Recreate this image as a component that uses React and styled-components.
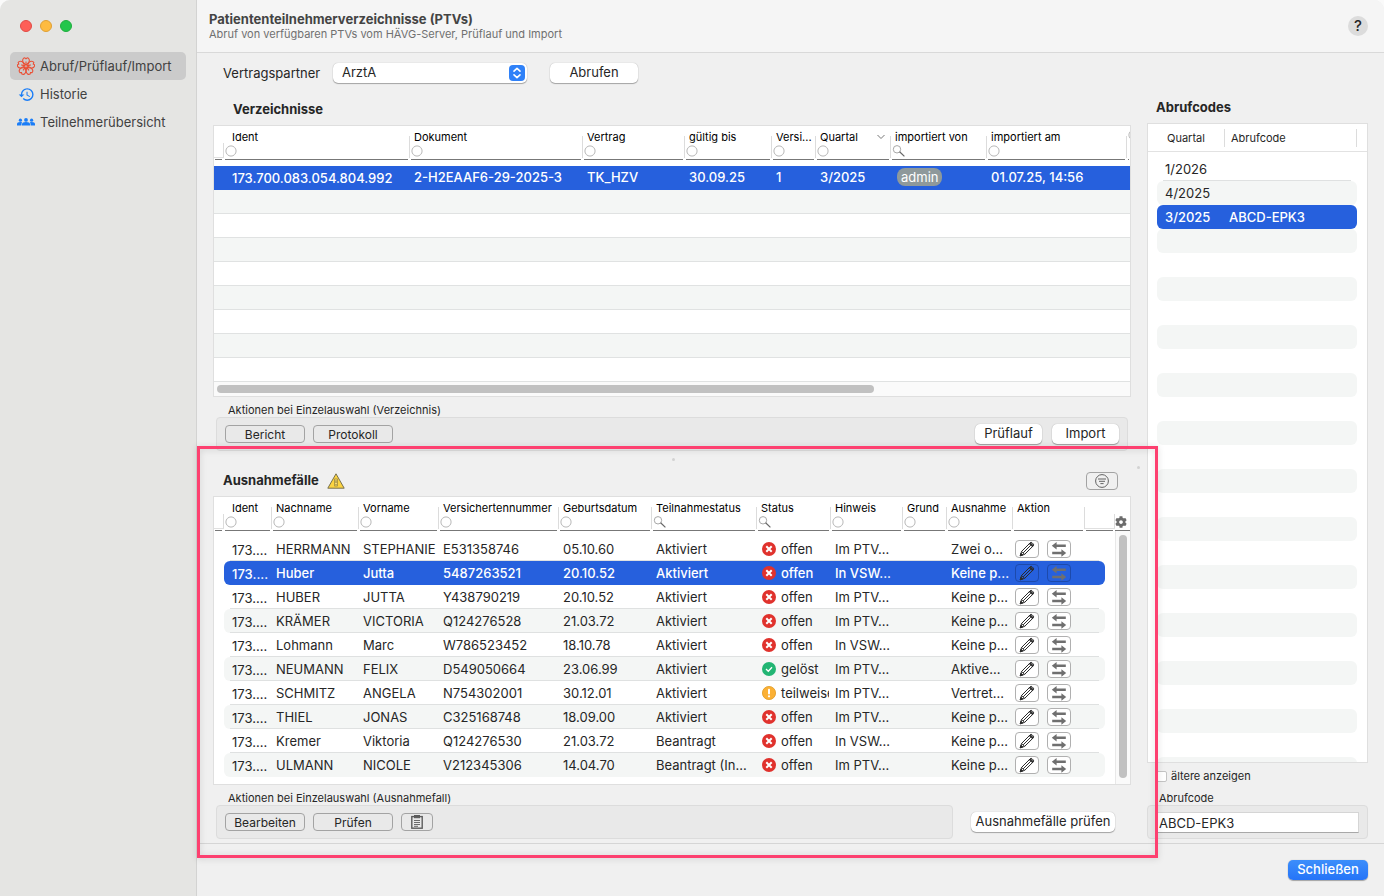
import { useState } from "react";
import styled, { createGlobalStyle } from "styled-components";
import { FaCog } from "react-icons/fa";
import { MdHistory } from "react-icons/md";

const listColumns = [
    { label: "Ident", filter: "any" },
    { label: "Dokument", filter: "any" },
    { label: "Vertrag", filter: "any" },
    { label: "gültig bis", filter: "any" },
    { label: "Versi...", filter: "any" },
    { label: "Quartal", filter: "any", sorted: true },
    { label: "importiert von", filter: "search" },
    { label: "importiert am", filter: "any" },
    { label: "", filter: "any" },
];

const caseColumns = [
    { label: "Ident", filter: "any" },
    { label: "Nachname", filter: "any" },
    { label: "Vorname", filter: "any" },
    { label: "Versichertennummer", filter: "any" },
    { label: "Geburtsdatum", filter: "any" },
    { label: "Teilnahmestatus", filter: "search" },
    { label: "Status", filter: "search" },
    { label: "Hinweis", filter: "any" },
    { label: "Grund", filter: "any" },
    { label: "Ausnahme", filter: "any" },
    { label: "Aktion" },
];

const cases = [
    ["HERRMANN", "STEPHANIE", "E531358746", "05.10.60", "Aktiviert", "offen", "Im PTV...", "Zwei o..."],
    ["Huber", "Jutta", "5487263521", "20.10.52", "Aktiviert", "offen", "In VSW...", "Keine p..."],
    ["HUBER", "JUTTA", "Y438790219", "20.10.52", "Aktiviert", "offen", "Im PTV...", "Keine p..."],
    ["KRÄMER", "VICTORIA", "Q124276528", "21.03.72", "Aktiviert", "offen", "Im PTV...", "Keine p..."],
    ["Lohmann", "Marc", "W786523452", "18.10.78", "Aktiviert", "offen", "In VSW...", "Keine p..."],
    ["NEUMANN", "FELIX", "D549050664", "23.06.99", "Aktiviert", "gelöst", "Im PTV...", "Aktive..."],
    ["SCHMITZ", "ANGELA", "N754302001", "30.12.01", "Aktiviert", "teilweise", "Im PTV...", "Vertret..."],
    ["THIEL", "JONAS", "C325168748", "18.09.00", "Aktiviert", "offen", "Im PTV...", "Keine p..."],
    ["Kremer", "Viktoria", "Q124276530", "21.03.72", "Beantragt", "offen", "In VSW...", "Keine p..."],
    ["ULMANN", "NICOLE", "V212345306", "14.04.70", "Beantragt (In...", "offen", "Im PTV...", "Keine p..."],
];

const codes = [
    ["1/2026", ""],
    ["4/2025", ""],
    ["3/2025", "ABCD-EPK3"],
];

const FlowerIcon = () => (
    <svg width="18" height="18" viewBox="0 0 18 18" fill="none" stroke="#ea5036" strokeWidth="1.1">
        {[0, 72, 144, 216, 288].map((angle) => (
            <g key={angle} transform={`rotate(${angle} 9 9.4)`}>
                <path d="M9 8.2 L6.2 5.4 C4.9 3.2 6 1 7.8 0.8 L9 1.8 L10.2 0.8 C12 1 13.1 3.2 11.8 5.4 Z" />
                <path d="M9 4.4 V7.6" />
            </g>
        ))}
    </svg>
);

const PeopleIcon = () => (
    <svg width="18" height="8" viewBox="0 0 18 8" fill="#1a7df7">
        <circle cx="3.4" cy="2.2" r="1.6" />
        <circle cx="9" cy="1.9" r="1.9" />
        <circle cx="14.6" cy="2.2" r="1.6" />
        <path d="M0 7.6 V6 Q0 4 3.4 4 Q4.6 4 5.2 4.3 Q4.4 5.2 4.4 6.2 V7.6 Z" />
        <path d="M5 7.6 V6.2 Q5 3.9 9 3.9 Q13 3.9 13 6.2 V7.6 Z" />
        <path d="M18 7.6 V6 Q18 4 14.6 4 Q13.4 4 12.8 4.3 Q13.6 5.2 13.6 6.2 V7.6 Z" />
    </svg>
);

const CircleIcon = () => (
    <svg width="12" height="12" viewBox="0 0 12 12">
        <circle cx="6" cy="6" r="5.1" fill="#fff" stroke="#b8b8b8" />
    </svg>
);

const LoupeIcon = () => (
    <svg width="14" height="12" viewBox="0 0 14 12" fill="none">
        <circle cx="5" cy="4.3" r="3.7" stroke="#a8a8a8" />
        <path d="M7.6 6.8 L12.4 11.4" stroke="#666" strokeWidth="1.2" />
    </svg>
);

const StatusIcon = ({ status }) => {
    if (status === "gelöst") {
        return (
            <svg width="14" height="14" viewBox="0 0 14 14" fill="none">
                <circle cx="7" cy="7" r="7" fill="#22b573" />
                <path d="M4 7 L6.3 9.2 L10 5.2" stroke="#fff" strokeWidth="1.3" />
            </svg>
        );
    }
    if (status === "teilweise") {
        return (
            <svg width="14" height="14" viewBox="0 0 14 14">
                <circle cx="7" cy="7" r="6.6" fill="#fbb034" stroke="#e09a25" strokeWidth="0.8" />
                <rect x="6" y="2.8" width="2" height="5.6" rx="0.8" fill="#fff" />
                <circle cx="7" cy="10.3" r="1.1" fill="#fff" />
            </svg>
        );
    }
    return (
        <svg width="14" height="14" viewBox="0 0 14 14">
            <circle cx="7" cy="7" r="7" fill="#e0322d" />
            <path d="M4.3 4.3 L9.7 9.7 M9.7 4.3 L4.3 9.7" stroke="#fff" strokeWidth="2" />
        </svg>
    );
};

const PencilIcon = () => (
    <svg width="16" height="16" viewBox="0 0 16 16" fill="none" stroke="#2b2b2b" strokeWidth="1">
        <path d="M1.2 14.8 L2.6 10.4 L11.2 1.8 Q12.2 0.9 13.1 1.8 L14.3 3 Q15.1 3.9 14.3 4.8 L5.6 13.4 Z" />
        <path d="M2.6 10.4 L5.6 13.4 M4.1 11.9 L11.8 4.2" />
        <path d="M1.2 14.8 L2 12.2 L3.8 14 Z M11.4 1.8 L14.3 4.7 L13.2 5.6 L10.4 2.8 Z" fill="#2b2b2b" />
    </svg>
);

const SwapIcon = () => (
    <svg width="16" height="16" viewBox="0 0 16 16" fill="#6f6f6f">
        <path d="M0.8 4.8 L5.6 1 V3.6 H14.8 V6 H5.6 V8.6 Z" />
        <path d="M15.2 12 L10.4 8.2 V10.8 H1.2 V13.2 H10.4 V15.8 Z" />
    </svg>
);

const WarningIcon = () => (
    <svg width="18" height="16" viewBox="0 0 18 16">
        <path d="M9 0.8 L17.2 15.2 H0.8 Z" fill="#fdd440" stroke="#77704f" strokeLinejoin="round" />
        <rect x="7.7" y="6" width="2.6" height="7" fill="#fbe07a" stroke="#8a7a35" strokeWidth="0.7" />
        <path d="M9 7.2 V10 M9 11 V12.2" stroke="#6f6126" strokeWidth="0.8" />
    </svg>
);

const FilterIcon = () => (
    <svg width="14" height="14" viewBox="0 0 14 14" fill="none" stroke="#636363">
        <circle cx="7" cy="7" r="6.4" />
        <path d="M3 5 H11 M4 7.3 H10 M5.4 9.6 H8.6" />
    </svg>
);

const ClipboardIcon = () => (
    <svg width="12" height="14" viewBox="0 0 12 14" fill="none" stroke="#5c5c5c">
        <rect x="0.8" y="1.6" width="10.4" height="11.6" strokeWidth="1.4" />
        <rect x="3.5" y="0.5" width="5" height="2.2" fill="#5c5c5c" />
        <path d="M3 5.5 H9 M3 7.5 H9 M3 9.5 H9 M3 11.3 H7" strokeWidth="0.9" />
    </svg>
);

const HeaderCells = ({ columns }) => (
    <>
        <HeadCell as="td" $blank />
        {columns.map(({ label, filter, sorted }, index) => (
            <HeadCell key={index} $first={index === 0}>
                <HeadLabel>
                    {label}
                    {sorted && (
                        <svg width="8" height="6" viewBox="0 0 8 6" fill="none" stroke="#777">
                            <path d="M0.5 1 L4 4.5 L7.5 1" />
                        </svg>
                    )}
                </HeadLabel>
                {filter && (
                    <FilterField>
                        {filter === "search" ? <LoupeIcon /> : <CircleIcon />}
                        <input type="text" aria-label={`${label} filtern`} />
                    </FilterField>
                )}
            </HeadCell>
        ))}
    </>
);

const Directories = () => (
    <section>
        <Heading>Verzeichnisse</Heading>
        <Panel>
            <Table>
                <thead>
                    <ListHead>
                        <HeaderCells columns={listColumns} />
                    </ListHead>
                </thead>
                <ListBody>
                    <ListRow $selected>
                        <td />
                        <Cell $first>173.700.083.054.804.992</Cell>
                        <Cell>2-H2EAAF6-29-2025-3</Cell>
                        <Cell>TK_HZV</Cell>
                        <Cell>30.09.25</Cell>
                        <Cell>1</Cell>
                        <Cell>3/2025</Cell>
                        <Cell><Badge>admin</Badge></Cell>
                        <Cell>01.07.25, 14:56</Cell>
                    </ListRow>
                    {Array.from({ length: 8 }, (_, index) => (
                        <ListRow key={index} $odd={index % 2 === 0}><td /></ListRow>
                    ))}
                </ListBody>
            </Table>
            <ScrollTrack><ScrollThumb /></ScrollTrack>
        </Panel>
        <Group>
            <GroupLabel>Aktionen bei Einzelauswahl (Verzeichnis)</GroupLabel>
            <GroupBox>
                <FlatButton>Bericht</FlatButton>
                <FlatButton>Protokoll</FlatButton>
                <Spacer />
                <PushButton $width={67}>Prüflauf</PushButton>
                <PushButton $width={67}>Import</PushButton>
            </GroupBox>
        </Group>
    </section>
);

const Exceptions = () => {
    const [selected, setSelected] = useState(1);

    return (
        <ExceptionSection>
            <ExceptionTitle>
                <h2>Ausnahmefälle</h2>
                <WarningIcon />
                <Spacer />
                <FlatButton $small aria-label="Filter"><FilterIcon /></FlatButton>
            </ExceptionTitle>
            <Panel>
                <Table>
                    <thead>
                        <CaseHead>
                            <HeaderCells columns={caseColumns} />
                            <HeadCell as="td" $blank />
                            <GearCell><FaCog /></GearCell>
                        </CaseHead>
                    </thead>
                    <CaseBody>
                        {cases.map(([last, first, number, born, state, status, hint, exception], index) => (
                            <CaseRow
                                key={index}
                                $odd={index % 2 === 1}
                                $selected={index === selected}
                                onClick={() => setSelected(index)}
                            >
                                <Cell $first>173....</Cell>
                                <Cell>{last}</Cell>
                                <Cell>{first}</Cell>
                                <Cell>{number}</Cell>
                                <Cell>{born}</Cell>
                                <Cell>{state}</Cell>
                                <Cell>
                                    <Status><StatusIcon status={status} /><span>{status}</span></Status>
                                </Cell>
                                <Cell>{hint}</Cell>
                                <Cell />
                                <Cell>{exception}</Cell>
                                <ActionCell>
                                    <RowButton aria-label="Bearbeiten" $selected={index === selected}><PencilIcon /></RowButton>
                                    <RowButton aria-label="Abgleichen" $selected={index === selected}><SwapIcon /></RowButton>
                                </ActionCell>
                            </CaseRow>
                        ))}
                    </CaseBody>
                </Table>
                <SideTrack><SideThumb /></SideTrack>
            </Panel>
            <BottomRow>
                <Group>
                    <GroupLabel>Aktionen bei Einzelauswahl (Ausnahmefall)</GroupLabel>
                    <GroupBox>
                        <FlatButton>Bearbeiten</FlatButton>
                        <FlatButton>Prüfen</FlatButton>
                        <FlatButton $small aria-label="Protokoll"><ClipboardIcon /></FlatButton>
                    </GroupBox>
                </Group>
                <PushButton $width={144}>Ausnahmefälle prüfen</PushButton>
            </BottomRow>
            <GripDot />
            <GripDot $side />
            <Highlight />
        </ExceptionSection>
    );
};

const Codes = () => {
    const [code, setCode] = useState("ABCD-EPK3");
    const [older, setOlder] = useState(false);

    return (
        <CodeSection>
            <CodeHeading>Abrufcodes</CodeHeading>
            <CodePanel>
                <Table>
                    <thead>
                        <CodeHead>
                            <th>Quartal</th>
                            <th>Abrufcode</th>
                        </CodeHead>
                    </thead>
                    <CodeBody>
                        {Array.from({ length: 26 }, (_, index) => (
                            <CodeRow
                                key={index}
                                $odd={index % 2 === 1}
                                $selected={index === 2}
                                $line={index === 0}
                            >
                                <td>{codes[index]?.[0]}</td>
                                <td>{codes[index]?.[1]}</td>
                            </CodeRow>
                        ))}
                    </CodeBody>
                </Table>
            </CodePanel>
            <CheckLabel>
                <input type="checkbox" checked={older} onChange={() => setOlder(!older)} />
                ältere anzeigen
            </CheckLabel>
            <GroupLabel as="label" htmlFor="code">Abrufcode</GroupLabel>
            <GroupBox>
                <CodeInput id="code" value={code} onChange={(e) => setCode(e.target.value)} />
            </GroupBox>
        </CodeSection>
    );
};

const App = () => (
    <>
        <GlobalStyle />
        <Window>
            <Sidebar>
                <Lights>
                    <Light $color="#fe5f57" $edge="#e14b45" />
                    <Light $color="#febb40" $edge="#dfa035" />
                    <Light $color="#23c64b" $edge="#1fae3e" />
                </Lights>
                <nav>
                    <NavItem href="#abruf" $active><span><FlowerIcon /></span>Abruf/Prüflauf/Import</NavItem>
                    <NavItem href="#historie"><span><MdHistory size={17} color="#1a7df7" /></span>Historie</NavItem>
                    <NavItem href="#teilnehmer"><span><PeopleIcon /></span>Teilnehmerübersicht</NavItem>
                </nav>
            </Sidebar>
            <Main>
                <TopBar>
                    <div>
                        <h1>Patiententeilnehmerverzeichnisse (PTVs)</h1>
                        <p>Abruf von verfügbaren PTVs vom HÄVG-Server, Prüflauf und Import</p>
                    </div>
                    <HelpButton>?</HelpButton>
                </TopBar>
                <Toolbar>
                    <label htmlFor="partner">Vertragspartner</label>
                    <SelectBox>
                        <select id="partner">
                            <option>ArztA</option>
                        </select>
                        <svg width="16" height="16" viewBox="0 0 16 16" fill="none" stroke="#fff" strokeWidth="1.6" strokeLinecap="round" strokeLinejoin="round">
                            <path d="M5 6.2 L8 3.4 L11 6.2 M5 9.8 L8 12.6 L11 9.8" />
                        </svg>
                    </SelectBox>
                    <PushButton $width={88}>Abrufen</PushButton>
                </Toolbar>
                <Columns>
                    <div>
                        <Directories />
                        <Exceptions />
                    </div>
                    <Codes />
                </Columns>
                <Footer>
                    <PrimaryButton>Schließen</PrimaryButton>
                </Footer>
            </Main>
        </Window>
    </>
);

const GlobalStyle = createGlobalStyle`
    * {
        box-sizing:border-box;
    }
    body {
        margin:0;
        background:#fafafa;
        color:#262626;
        font:13px/16px Inter, "Liberation Sans", sans-serif;
    }
    button, input, select {
        font:inherit;
        color:inherit;
    }
    h1, h2, p {
        margin:0;
        font-size:13px;
    }
    svg {
        display:block;
        flex:none;
    }
`

const Window = styled.div`
    display:grid;
    grid-template-columns:197px minmax(0, 1fr);
    min-height:100vh;
    border-radius:10px 10px 0 0;
    overflow:hidden;
    background:#f0f0f0;
`

const Sidebar = styled.aside`
    background:#e5e5e3;
    border-right:1px solid #d3d3d2;
    padding:20px 10px;
`

const Lights = styled.div`
    display:flex;
    gap:8px;
    padding:0 10px;
    margin-bottom:20px;
`

const Light = styled.span`
    width:12px;
    height:12px;
    border-radius:50%;
    background:${({ $color }) => $color};
    border:1px solid ${({ $edge }) => $edge};
`

const NavItem = styled.a`
    display:flex;
    align-items:center;
    height:28px;
    padding-left:6px;
    border-radius:5px;
    color:#414141;
    text-decoration:none;
    background:${({ $active }) => $active ? "#cbcbcb" : "transparent"};
    span {
        display:flex;
        justify-content:center;
        width:20px;
        margin-right:4px;
    }
`

const Main = styled.main`
    display:flex;
    flex-direction:column;
    min-width:0;
`

const TopBar = styled.header`
    display:flex;
    align-items:center;
    justify-content:space-between;
    height:53px;
    padding:0 16px 0 12px;
    background:#f5f5f5;
    border-bottom:1px solid #d9d9d9;
    h1 {
        color:#444;
        font-weight:700;
    }
    p {
        color:#707070;
        font-size:11px;
        line-height:14px;
    }
`

const HelpButton = styled.button`
    width:20px;
    height:20px;
    padding:0;
    border:0;
    border-radius:50%;
    background:#dcdcdc;
    font-size:15px;
    font-weight:500;
`

const Toolbar = styled.div`
    display:flex;
    align-items:center;
    height:40px;
    padding-left:26px;
    label {
        width:110px;
    }
    button {
        margin-left:23px;
    }
`

const SelectBox = styled.div`
    display:grid;
    grid-template-columns:1fr 18px;
    align-items:center;
    width:194px;
    height:20px;
    border-radius:5px;
    background:#fff;
    box-shadow:0 1px 1px rgba(0, 0, 0, .3), 0 0 1px rgba(0, 0, 0, .3);
    select {
        grid-area:1 / 1 / 2 / 3;
        height:20px;
        padding:0 9px 2px;
        border:0;
        background:transparent;
        appearance:none;
    }
    svg {
        grid-area:1 / 2;
        border-radius:4px;
        background:#2f81f8;
        pointer-events:none;
    }
`

const PushButton = styled.button`
    flex:none;
    width:${({ $width }) => $width}px;
    height:20px;
    padding:0 0 2px;
    border:0;
    border-radius:5px;
    background:#fff;
    white-space:nowrap;
    box-shadow:0 1px 1px rgba(0, 0, 0, .3), 0 0 1px rgba(0, 0, 0, .3);
`

const PrimaryButton = styled(PushButton)`
    width:80px;
    color:#fff;
    font-weight:500;
    background:linear-gradient(#3c8efb, #2574f8);
`

const FlatButton = styled.button`
    display:flex;
    align-items:center;
    justify-content:center;
    width:${({ $small }) => $small ? 32 : 80}px;
    height:18px;
    padding:${({ $small }) => $small ? "0" : "1px 0 0"};
    border:1px solid #a3a3a3;
    border-radius:4px;
    background:transparent;
    font-size:12px;
`

const Columns = styled.div`
    flex:1;
    display:grid;
    grid-template-columns:minmax(918px, 1fr) 221px;
    gap:16px;
    padding:0 16px 4px;
    margin-top:-10px;
    border-bottom:1px solid #d5d5d5;
`

const Heading = styled.h2`
    padding:18px 20px 8px;
`

const Panel = styled.div`
    position:relative;
    overflow:hidden;
    border:1px solid #dfdfdf;
    background:#fff;
`

const Table = styled.table`
    display:block;
    thead, tbody {
        display:block;
    }
    td {
        padding:0;
    }
`

const ListHead = styled.tr`
    display:grid;
    grid-template-columns:10px 186px 173px 102px 87px 44px 75px 96px 140px minmax(3px, 1fr);
    height:34px;
`

const CaseHead = styled(ListHead)`
    grid-template-columns:10px 48px 87px 80px 120px 93px 105px 74px 72px 44px 66px 72px minmax(30px, 1fr) 15px;
`

const HeadCell = styled.th`
    overflow:hidden;
    padding:3px 2px 0;
    color:#000;
    font-size:11px;
    font-weight:400;
    text-align:left;
    white-space:nowrap;
    background:
        linear-gradient(#777, #777) 1px 100% / calc(100% - 3px) 1px no-repeat,
        linear-gradient(#e0e0e0, #e0e0e0) 0 31px / ${({ $blank }) => $blank ? "100%" : "0"} 1px no-repeat,
        linear-gradient(#dcdcdc, #dcdcdc) 100% ${({ $blank }) => $blank ? "17px / 1px 15px" : "10px / 1px 22px"} no-repeat;
    > div {
        padding-left:${({ $first }) => $first ? 6 : 2}px;
    }
`

const HeadLabel = styled.div`
    display:flex;
    align-items:center;
    justify-content:space-between;
    padding-right:4px;
`

const FilterField = styled.label`
    display:flex;
    align-items:center;
    height:12px;
    margin-left:-1px;
    input {
        flex:1;
        min-width:0;
        height:12px;
        padding:0;
        border:0;
        outline:0;
        background:transparent;
    }
`

const GearCell = styled.td`
    display:flex;
    align-items:flex-end;
    border-bottom:1px solid #777;
    font-size:12px;
    color:#6c6c6c;
    svg {
        margin-bottom:2px;
    }
`

const ListBody = styled.tbody`
    padding-top:6px;
`

const Cell = styled.td`
    overflow:hidden;
    white-space:nowrap;
    && {
        padding:${({ $first }) => $first ? "1px 0 0 8px" : "0 0 1px 4px"};
    }
`

const rowColor = ({ $selected, $odd }) => $selected ? "#2660dd" : $odd ? "#f4f6f5" : "#fff";

const ListRow = styled.tr`
    display:grid;
    grid-template-columns:10px 186px 173px 102px 87px 44px 75px 96px 1fr;
    align-items:center;
    height:24px;
    color:${({ $selected }) => $selected ? "#fff" : "inherit"};
    font-weight:${({ $selected }) => $selected ? 500 : 400};
    background:${rowColor};
    border-bottom:1px solid ${({ $selected }) => $selected ? "#2660dd" : "#e0e2e2"};
`

const Badge = styled.span`
    display:block;
    width:max-content;
    height:18px;
    margin-left:2px;
    padding:0 4px;
    border-radius:8px;
    background:#8e999b;
    font-weight:400;
    line-height:18px;
`

const ScrollTrack = styled.div`
    height:14px;
    padding:3px 0 0 3px;
    background:#fafafa;
`

const ScrollThumb = styled.div`
    width:72%;
    height:8px;
    border-radius:4px;
    background:#c1c1c1;
`

const Group = styled.div`
    margin:0 3px;
`

const GroupLabel = styled.div`
    display:block;
    margin-top:6px;
    padding-left:12px;
    font-size:11px;
    line-height:14px;
`

const GroupBox = styled.div`
    display:flex;
    align-items:center;
    gap:8px;
    height:34px;
    padding:0 8px;
    border:1px solid #dcdcdc;
    border-radius:4px;
    background:#e9e9e9;
    ${PushButton} + ${PushButton} {
        margin-left:2px;
    }
`

const Spacer = styled.div`
    flex:1;
`

const ExceptionSection = styled.section`
    position:relative;
    padding-top:21px;
`

const ExceptionTitle = styled.div`
    display:flex;
    align-items:center;
    height:18px;
    margin-bottom:6px;
    padding:0 13px 0 10px;
    h2 {
        margin-right:8px;
        padding-bottom:2px;
    }
`

const CaseBody = styled.tbody`
    padding:6px 25px 7px 10px;
`

const CaseRow = styled.tr`
    display:grid;
    grid-template-columns:48px 87px 80px 120px 93px 105px 74px 72px 44px 66px 1fr;
    align-items:center;
    height:24px;
    border-radius:6px;
    color:${({ $selected }) => $selected ? "#fff" : "inherit"};
    font-weight:${({ $selected }) => $selected ? 500 : 400};
    background:linear-gradient(#dfe1e1, #dfe1e1) 50% 100% / ${({ $selected }) => $selected ? "0" : "calc(100% - 12px)"} 1px no-repeat ${rowColor};
    &:last-child {
        background:${rowColor};
    }
`

const Status = styled.div`
    display:flex;
    align-items:center;
    gap:5px;
    margin-right:2px;
    padding-left:1px;
    overflow:hidden;
`

const ActionCell = styled.td`
    display:flex;
    gap:8px;
    && {
        padding-left:2px;
    }
`

const RowButton = styled.button`
    display:flex;
    align-items:center;
    justify-content:center;
    width:24px;
    height:18px;
    padding:0;
    border:1px solid ${({ $selected }) => $selected ? "#1d4aab" : "#b0b0b0"};
    border-radius:4px;
    background:${({ $selected }) => $selected ? "transparent" : "#fff"};
`

const SideTrack = styled.div`
    position:absolute;
    top:34px;
    right:0;
    bottom:0;
    width:15px;
    padding:4px 3px 6px;
    border-left:1px solid #e8e8e8;
    background:#fafafa;
`

const SideThumb = styled.div`
    width:8px;
    height:100%;
    border-radius:4px;
    background:#c1c1c1;
`

const BottomRow = styled.div`
    display:flex;
    align-items:flex-end;
    gap:15px;
    padding-right:16px;
    ${Group} {
        flex:1;
    }
    > ${PushButton} {
        margin-bottom:7px;
    }
`

const GripDot = styled.span`
    position:absolute;
    top:${({ $side }) => $side ? 15 : 7}px;
    left:${({ $side }) => $side ? "calc(100% + 6px)" : "50%"};
    width:3px;
    height:3px;
    border-radius:50%;
    background:#d2d2d2;
`

const Highlight = styled.div`
    position:absolute;
    z-index:2;
    top:-5px;
    right:-27px;
    bottom:-19px;
    left:-16px;
    border:3px solid #fd4070;
    filter:drop-shadow(0 1px 3px rgba(0, 0, 0, .15));
    pointer-events:none;
`

const CodeSection = styled.section`
    display:flex;
    flex-direction:column;
    min-width:0;
`

const CodeHeading = styled.h2`
    padding:16px 9px 8px;
`

const CodePanel = styled(Panel)`
    flex:1 1 0;
    min-height:0;
`

const CodeHead = styled.tr`
    display:grid;
    grid-template-columns:77px 1fr;
    align-items:center;
    height:28px;
    padding-right:10px;
    border-bottom:1px solid #e2e2e2;
    th {
        height:18px;
        padding:0 0 0 6px;
        border-right:1px solid #dcdcdc;
        font-size:11px;
        font-weight:400;
        line-height:18px;
        text-align:left;
    }
    th:first-child {
        padding-left:19px;
    }
`

const CodeBody = styled.tbody`
    padding:5px 10px 0 9px;
`

const CodeRow = styled(CaseRow)`
    grid-template-columns:64px 1fr;
    background:linear-gradient(#dfe1e1, #dfe1e1) 50% 100% / ${({ $line }) => $line ? "calc(100% - 12px)" : "0"} 1px no-repeat ${rowColor};
    && td {
        padding:0 0 1px 8px;
    }
`

const CheckLabel = styled.label`
    display:flex;
    align-items:center;
    gap:4px;
    margin:6px 0 2px;
    padding-left:9px;
    font-size:11px;
    line-height:14px;
    input {
        appearance:none;
        width:11px;
        height:11px;
        margin:0;
        border:1px solid #c4c4c4;
        border-radius:2px;
        background:#fff;
    }
    input:checked {
        background:#2f81f8;
    }
`

const CodeInput = styled.input`
    width:100%;
    height:21px;
    padding:2px 2px 0;
    border:1px solid #d5d5d5;
    border-bottom-color:#a8a8a8;
    background:#fff;
`

const Footer = styled.footer`
    display:flex;
    justify-content:flex-end;
    padding:16px;
`

export default App;
